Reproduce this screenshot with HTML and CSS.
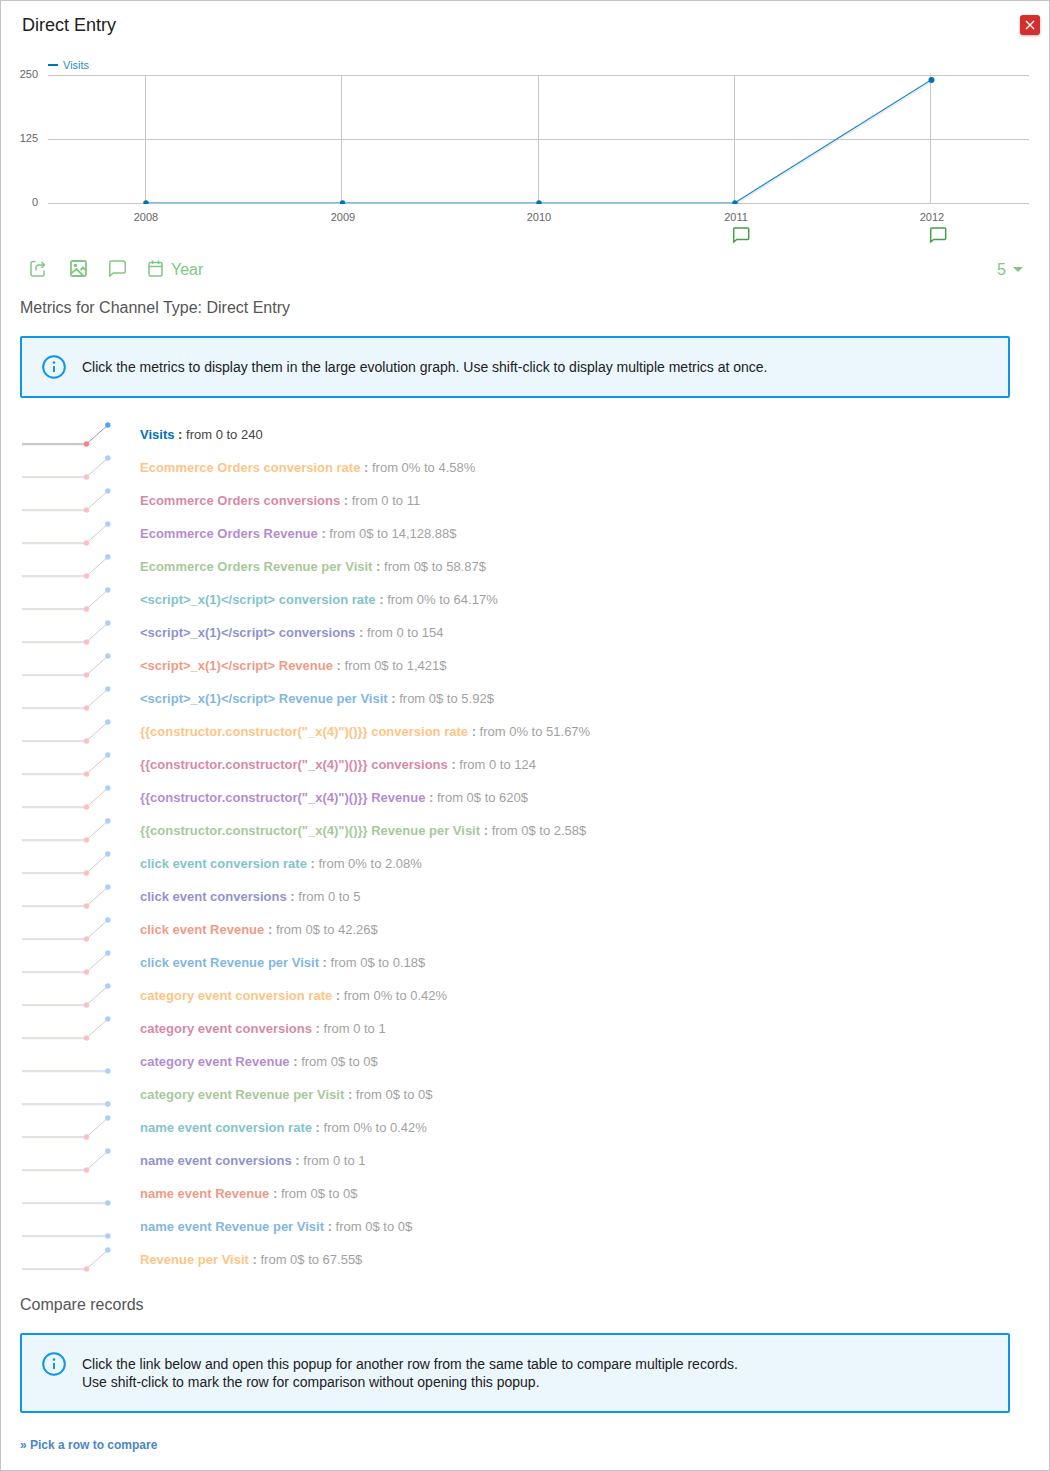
FILE: index.html
```html
<!DOCTYPE html>
<html lang="en">
<head>
    <meta charset="UTF-8">
    <title>Direct Entry</title>
    <link rel="stylesheet" href="styles.css">
</head>
<body>
    <svg class="defs" width="0" height="0">
        <symbol id="sparkUp" viewBox="0 0 100 33">
            <path class="spark-flat" d="M2 26.200H66"/>
            <path class="spark-slope" d="M66.500 26L87.800 7"/>
            <circle class="spark-min" cx="66.500" cy="26" r="2.700"/>
            <circle class="spark-max" cx="87.800" cy="7" r="2.700"/>
        </symbol>
        <symbol id="sparkFlat" viewBox="0 0 100 33">
            <path class="spark-flat" d="M2 26.200H87"/>
            <circle class="spark-max" cx="87.800" cy="26" r="2.700"/>
        </symbol>
    </svg>
    <div class="popup">
        <div class="popup-head">
            <h1>Direct Entry</h1>
            <button class="close-btn" aria-label="Close">
                <svg width="10" height="10" viewBox="0 0 10 10"><path d="M1 1L9 9M9 1L1 9"/></svg>
            </button>
        </div>

        <svg class="chart" width="1048" height="195" viewBox="1 55 1048 195">
            <path class="legend-dash" d="M48 65H58"/>
            <text class="legend-text" x="63" y="69">Visits</text>
            <path class="grid" d="M48 75.500H1029M48 139.500H1029M48 203.500H1029M145.500 75V203M341.500 75V203M538.500 75V203M734.500 75V203M930.500 75V203"/>
            <text class="axis" x="38" y="78" text-anchor="end">250</text>
            <text class="axis" x="38" y="142" text-anchor="end">125</text>
            <text class="axis" x="38" y="206" text-anchor="end">0</text>
            <path class="serie-shadow" d="M737 203.500L932 81.500"/>
            <path class="serie-flat" d="M146 202.700H735"/>
            <path class="serie" d="M735 202.700L931 80"/>
            <circle class="point" cx="146" cy="203" r="2.700"/>
            <circle class="point" cx="342.500" cy="203" r="2.700"/>
            <circle class="point" cx="539" cy="203" r="2.700"/>
            <circle class="point" cx="735" cy="203" r="2.700"/>
            <rect class="axis-clip" x="130" y="204" width="620" height="4"/>
            <circle class="point" cx="931.500" cy="80" r="3"/>
            <text class="axis" x="146" y="221" text-anchor="middle">2008</text>
            <text class="axis" x="343" y="221" text-anchor="middle">2009</text>
            <text class="axis" x="539" y="221" text-anchor="middle">2010</text>
            <text class="axis" x="736" y="221" text-anchor="middle">2011</text>
            <text class="axis" x="932" y="221" text-anchor="middle">2012</text>
            <path class="note" d="M733.700 229a1 1 0 0 1 1-1h13a1 1 0 0 1 1 1v9.500a1 1 0 0 1-1 1h-11l-3 2.500z"/>
            <path class="note" d="M930.700 229a1 1 0 0 1 1-1h13a1 1 0 0 1 1 1v9.500a1 1 0 0 1-1 1h-11l-3 2.500z"/>
        </svg>

        <div class="toolbar">
            <div class="toolbar-left">
                <svg class="tool" width="16" height="17" viewBox="0 0 16 17"><path d="M5.500 1.500H3A2 2 0 0 0 1 3.500v10.500A2 2 0 0 0 3 16h9a2 2 0 0 0 2-2V10.500M6 10.500V8a3 3 0 0 1 3-3h5M11.500 2l3 3-3 3"/></svg>
                <svg class="tool tool-thick" width="17" height="17" viewBox="0 0 17 17"><rect x="1" y="1" width="15" height="15" rx="1.500"/><circle class="tool-fill" cx="5.500" cy="5.500" r="1.800"/><path d="M1 13.500L6.500 9l7 7M10.500 10L13 7.500l3 3"/></svg>
                <svg class="tool" width="17" height="17" viewBox="0 0 17 17"><path d="M.8 2.500A1.500 1.500 0 0 1 2.300 1h12.400A1.500 1.500 0 0 1 16.200 2.500v9a1.500 1.500 0 0 1-1.500 1.500H4.300L.8 16z"/></svg>
                <span class="year">
                    <svg class="tool" width="15" height="17" viewBox="0 0 15 17"><rect x="1" y="2.500" width="13" height="13.500" rx="1.500"/><path d="M1 6.500H14M4.500 .5V4M10.500 .5V4"/></svg>
                    <span class="tool-label">Year</span>
                </span>
            </div>
            <div class="periods"><span class="tool-label">5</span> <span class="caret"></span></div>
        </div>

        <h2 class="section-title">Metrics for Channel Type: Direct Entry</h2>

        <div class="alert">
            <svg class="alert-icon" width="24" height="24" viewBox="0 0 24 24"><circle cx="12" cy="12" r="10.800"/><path d="M12 11v6"/><circle class="alert-dot" cx="12" cy="7.500" r="1.300"/></svg>
            <div>Click the metrics to display them in the large evolution graph. Use shift-click to display multiple metrics at once.</div>
        </div>

        <div class="metrics">
            <div class="metric selected"><svg class="spark"><use href="#sparkUp"/></svg><span><b class="c-visits">Visits</b> <b>:</b> from 0 to 240</span></div>
            <div class="metric"><svg class="spark"><use href="#sparkUp"/></svg><span><b class="c-orange">Ecommerce Orders conversion rate</b> <b>:</b> from 0% to 4.58%</span></div>
            <div class="metric"><svg class="spark"><use href="#sparkUp"/></svg><span><b class="c-pink">Ecommerce Orders conversions</b> <b>:</b> from 0 to 11</span></div>
            <div class="metric"><svg class="spark"><use href="#sparkUp"/></svg><span><b class="c-purple">Ecommerce Orders Revenue</b> <b>:</b> from 0$ to 14,128.88$</span></div>
            <div class="metric"><svg class="spark"><use href="#sparkUp"/></svg><span><b class="c-green">Ecommerce Orders Revenue per Visit</b> <b>:</b> from 0$ to 58.87$</span></div>
            <div class="metric"><svg class="spark"><use href="#sparkUp"/></svg><span><b class="c-teal">&lt;script&gt;_x(1)&lt;/script&gt; conversion rate</b> <b>:</b> from 0% to 64.17%</span></div>
            <div class="metric"><svg class="spark"><use href="#sparkUp"/></svg><span><b class="c-indigo">&lt;script&gt;_x(1)&lt;/script&gt; conversions</b> <b>:</b> from 0 to 154</span></div>
            <div class="metric"><svg class="spark"><use href="#sparkUp"/></svg><span><b class="c-salmon">&lt;script&gt;_x(1)&lt;/script&gt; Revenue</b> <b>:</b> from 0$ to 1,421$</span></div>
            <div class="metric"><svg class="spark"><use href="#sparkUp"/></svg><span><b class="c-sky">&lt;script&gt;_x(1)&lt;/script&gt; Revenue per Visit</b> <b>:</b> from 0$ to 5.92$</span></div>
            <div class="metric"><svg class="spark"><use href="#sparkUp"/></svg><span><b class="c-orange">{{constructor.constructor("_x(4)")()}} conversion rate</b> <b>:</b> from 0% to 51.67%</span></div>
            <div class="metric"><svg class="spark"><use href="#sparkUp"/></svg><span><b class="c-pink">{{constructor.constructor("_x(4)")()}} conversions</b> <b>:</b> from 0 to 124</span></div>
            <div class="metric"><svg class="spark"><use href="#sparkUp"/></svg><span><b class="c-purple">{{constructor.constructor("_x(4)")()}} Revenue</b> <b>:</b> from 0$ to 620$</span></div>
            <div class="metric"><svg class="spark"><use href="#sparkUp"/></svg><span><b class="c-green">{{constructor.constructor("_x(4)")()}} Revenue per Visit</b> <b>:</b> from 0$ to 2.58$</span></div>
            <div class="metric"><svg class="spark"><use href="#sparkUp"/></svg><span><b class="c-teal">click event conversion rate</b> <b>:</b> from 0% to 2.08%</span></div>
            <div class="metric"><svg class="spark"><use href="#sparkUp"/></svg><span><b class="c-indigo">click event conversions</b> <b>:</b> from 0 to 5</span></div>
            <div class="metric"><svg class="spark"><use href="#sparkUp"/></svg><span><b class="c-salmon">click event Revenue</b> <b>:</b> from 0$ to 42.26$</span></div>
            <div class="metric"><svg class="spark"><use href="#sparkUp"/></svg><span><b class="c-sky">click event Revenue per Visit</b> <b>:</b> from 0$ to 0.18$</span></div>
            <div class="metric"><svg class="spark"><use href="#sparkUp"/></svg><span><b class="c-orange">category event conversion rate</b> <b>:</b> from 0% to 0.42%</span></div>
            <div class="metric"><svg class="spark"><use href="#sparkUp"/></svg><span><b class="c-pink">category event conversions</b> <b>:</b> from 0 to 1</span></div>
            <div class="metric"><svg class="spark"><use href="#sparkFlat"/></svg><span><b class="c-purple">category event Revenue</b> <b>:</b> from 0$ to 0$</span></div>
            <div class="metric"><svg class="spark"><use href="#sparkFlat"/></svg><span><b class="c-green">category event Revenue per Visit</b> <b>:</b> from 0$ to 0$</span></div>
            <div class="metric"><svg class="spark"><use href="#sparkUp"/></svg><span><b class="c-teal">name event conversion rate</b> <b>:</b> from 0% to 0.42%</span></div>
            <div class="metric"><svg class="spark"><use href="#sparkUp"/></svg><span><b class="c-indigo">name event conversions</b> <b>:</b> from 0 to 1</span></div>
            <div class="metric"><svg class="spark"><use href="#sparkFlat"/></svg><span><b class="c-salmon">name event Revenue</b> <b>:</b> from 0$ to 0$</span></div>
            <div class="metric"><svg class="spark"><use href="#sparkFlat"/></svg><span><b class="c-sky">name event Revenue per Visit</b> <b>:</b> from 0$ to 0$</span></div>
            <div class="metric"><svg class="spark"><use href="#sparkUp"/></svg><span><b class="c-orange">Revenue per Visit</b> <b>:</b> from 0$ to 67.55$</span></div>
        </div>

        <h2 class="section-title compare-title">Compare records</h2>

        <div class="alert">
            <svg class="alert-icon" width="24" height="24" viewBox="0 0 24 24"><circle cx="12" cy="12" r="10.800"/><path d="M12 11v6"/><circle class="alert-dot" cx="12" cy="7.500" r="1.300"/></svg>
            <div>Click the link below and open this popup for another row from the same table to compare multiple records.<br>Use shift-click to mark the row for comparison without opening this popup.</div>
        </div>

        <a class="compare-link" href="#">» Pick a row to compare</a>
    </div>
</body>
</html>
```

FILE: styles.css
```css
/* Reset default styles */
* {
    margin: 0;
    padding: 0;
    box-sizing: border-box;
}

body {
    font-family: "Liberation Sans", Arial, sans-serif;
    background-color: #fff;
    color: #212121;
}

.defs {
    position: absolute;
}

/* Popup frame */
.popup {
    height: 1471px;
    border: 1px solid #c4c4c4;
    overflow: hidden;
}

.popup-head {
    height: 54px;
    padding: 14px 9px 0 21px;
    display: flex;
    justify-content: space-between;
    align-items: flex-start;
}

h1 {
    font-size: 18px;
    font-weight: normal;
    line-height: 21px;
    color: #212121;
}

.close-btn {
    width: 20px;
    height: 20px;
    border: none;
    border-radius: 3px;
    background-color: #d32f2f;
    box-shadow: 0 1px 3px rgba(0, 0, 0, 0.3);
    display: flex;
    align-items: center;
    justify-content: center;
}

.close-btn path {
    stroke: #fff;
    stroke-width: 1.4;
    fill: none;
}

/* Chart */
.chart {
    display: block;
    font-family: "Liberation Sans", Arial, sans-serif;
}

.grid {
    stroke: #c8c8c8;
    stroke-width: 1;
    fill: none;
}

.axis {
    font-size: 11px;
    fill: #666;
}

.legend-dash {
    stroke: #0173b7;
    stroke-width: 2;
}

.legend-text {
    font-size: 11px;
    fill: #2a8bcb;
}

.serie {
    stroke: #1e88c8;
    stroke-width: 1.2;
    fill: none;
}

.serie-flat {
    stroke: #5ab0e4;
    stroke-width: 1;
    fill: none;
}

.serie-shadow {
    stroke: #dde3e8;
    stroke-width: 1;
    fill: none;
}

.point {
    fill: #0173b7;
}

.axis-clip {
    fill: #fff;
}

.note {
    fill: #fff;
    stroke: #43a047;
    stroke-width: 1.5;
}

/* Toolbar under the chart */
.toolbar {
    height: 36px;
    padding: 0 26px 0 29px;
    display: flex;
    justify-content: space-between;
    align-items: center;
    color: #81c784;
    font-size: 16px;
}

.toolbar-left {
    display: flex;
    align-items: center;
    gap: 23px;
}

.tool {
    fill: none;
    stroke: #81c784;
    stroke-width: 1.5;
}

.tool-thick {
    stroke-width: 1.8;
    margin: 0 -1px 0 1px;
}

.tool-fill {
    fill: #81c784;
    stroke: none;
}

.tool-label {
    padding-top: 3px;
}

.year {
    display: flex;
    align-items: center;
    gap: 8px;
    margin-left: -1px;
}

.periods {
    display: flex;
    align-items: center;
    gap: 7px;
}

.caret {
    width: 0;
    height: 0;
    margin-top: 2px;
    border-left: 5px solid transparent;
    border-right: 5px solid transparent;
    border-top: 5px solid #81c784;
}

/* Section titles */
.section-title {
    font-size: 16px;
    font-weight: normal;
    line-height: 22px;
    color: #555;
    margin: 11px 0 17px 19px;
}

.compare-title {
    margin-top: 18px;
}

/* Info boxes */
.alert {
    width: 990px;
    margin-left: 19px;
    padding: 20px;
    display: flex;
    gap: 16px;
    font-size: 14px;
    line-height: 18px;
    color: #212121;
    background-color: #ebf6fd;
    border: 2px solid #0f97e6;
    border-radius: 2px;
}

.alert-icon {
    flex: none;
    margin: -3px 0;
    fill: none;
    stroke: #0f97e6;
    stroke-width: 2;
}

.alert-dot {
    fill: #0f97e6;
    stroke: none;
}

/* Metric rows */
.metrics {
    margin: 20px 0 0 19px;
}

.metric {
    height: 33px;
    display: flex;
    align-items: center;
    gap: 20px;
    font-size: 13px;
    color: #444;
    opacity: 0.5;
}

.metric.selected {
    opacity: 1;
}

.spark {
    width: 100px;
    height: 33px;
    flex: none;
    overflow: visible;
}

.spark-flat {
    stroke: #c4c9d2;
    stroke-width: 2.2;
    fill: none;
}

.spark-slope {
    stroke: #9a9da8;
    stroke-width: 1;
    fill: none;
}

.spark-min {
    fill: #ff8080;
}

.spark-max {
    fill: #55a0ff;
}

.c-visits { color: #0173b7; }
.c-orange { color: #fd8b07; }
.c-pink { color: #b30f53; }
.c-purple { color: #6917a5; }
.c-green { color: #519335; }
.c-teal { color: #008b93; }
.c-indigo { color: #21279f; }
.c-salmon { color: #df370b; }
.c-sky { color: #0071c5; }

/* Link at the bottom */
.compare-link {
    display: block;
    margin: 25px 0 0 19px;
    font-size: 12px;
    line-height: 14px;
    font-weight: bold;
    color: #4a86c8;
    text-decoration: none;
}
```
